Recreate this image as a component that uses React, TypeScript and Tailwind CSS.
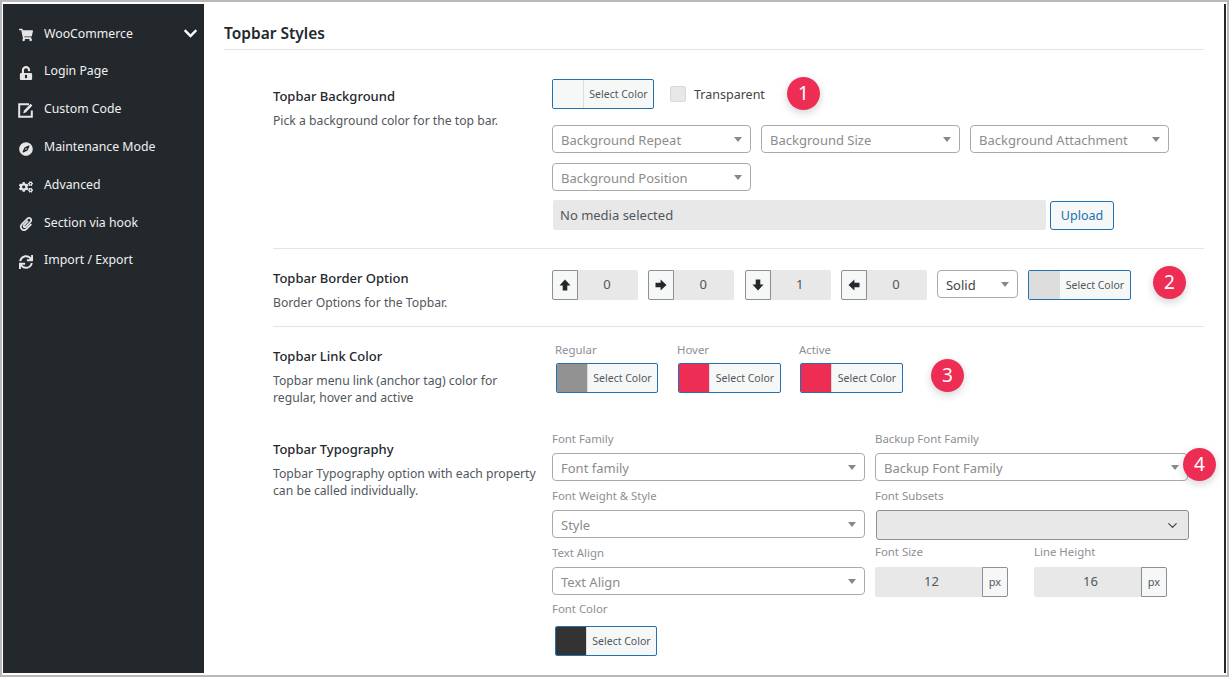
import React from "react";
import { FaShoppingCart, FaUnlockAlt, FaCompass, FaCogs, FaPaperclip, FaSync, FaChevronDown } from "react-icons/fa";
import { ChevronDown } from "lucide-react";

function EditIcon({ className = "" }: { className?: string }) {
  return (
    <svg viewBox="0 0 15 15" className={className} width="15" height="15" aria-hidden="true">
      <path d="M11 1.2H1.2v12.6h12.6V7.5" fill="none" stroke="currentColor" strokeWidth="2" />
      <path d="M12.6 0.8l1.8 1.8-6.6 6.8-2.6.8.8-2.6z" fill="currentColor" />
    </svg>
  );
}

function Arrow({ rotate }: { rotate: number }) {
  return (
    <svg viewBox="0 0 12 12" width="12" height="12" aria-hidden="true" style={{ transform: `rotate(${rotate}deg)` }}>
      <path d="M6 .5L11.5 6.4H8.3V11.5H3.7V6.4H.5z" fill="#23282d" />
    </svg>
  );
}

const menu = [
  { icon: FaShoppingCart, label: "WooCommerce" },
  { icon: FaUnlockAlt, label: "Login Page" },
  { icon: EditIcon, label: "Custom Code" },
  { icon: FaCompass, label: "Maintenance Mode" },
  { icon: FaCogs, label: "Advanced" },
  { icon: FaPaperclip, label: "Section via hook" },
  { icon: FaSync, label: "Import / Export" },
];

function Picker({ color, narrow = false, className = "" }: { color: string; narrow?: boolean; className?: string }) {
  return (
    <div className={"flex h-[30px] shrink-0 overflow-hidden rounded-[2px] border border-[#2271b1] bg-[#f6f7f7] " + (narrow ? "w-[102px] " : "w-[103px] ") + className}>
      <div className="w-[31px] shrink-0 border-r border-[#dcdcde]" style={{ backgroundColor: color }} />
      <div className="flex-1 text-center text-[10.5px] leading-[28px] text-[#50575e]">Select Color</div>
    </div>
  );
}

function Select({ label, className = "", dark = false }: { label: string; className?: string; dark?: boolean }) {
  return (
    <div className={"flex h-[28px] shrink-0 items-center justify-between rounded-[4px] border border-[#aaaaaa] bg-white pl-[8px] pr-[8px] " + className}>
      <span className={"pt-[3px] text-[13px] leading-none " + (dark ? "text-[#444]" : "text-[#8c8c8c]")}>{label}</span>
      <span className="h-0 w-0 border-x-[4px] border-t-[5px] border-x-transparent border-t-[#888]" />
    </div>
  );
}

function Badge({ n, className = "" }: { n: number; className?: string }) {
  return (
    <div className={"flex h-[33px] w-[33px] shrink-0 items-center justify-center rounded-full bg-[#ee2d55] text-[19px] leading-none text-white shadow-[0_3px_8px_rgba(0,0,0,0.18)] " + className}>
      {n}
    </div>
  );
}

function Dim({ rotate, value }: { rotate: number; value: string }) {
  return (
    <div className="flex h-[30px] w-[86px] shrink-0">
      <div className="flex w-[26px] items-center justify-center rounded-l-[2px] border border-[#8c8f94] bg-[#f6f7f7]">
        <Arrow rotate={rotate} />
      </div>
      <div className="flex-1 rounded-r-[2px] bg-[#e8e8e8] pr-[2px] text-center text-[13px] leading-[28px] text-[#50575e]">{value}</div>
    </div>
  );
}

function Info({ title, children }: { title: string; children: React.ReactNode }) {
  return (
    <div className="w-[279px] shrink-0 pr-[12px]">
      <div className="text-[13px] font-medium leading-[18px] text-[#23282d]">{title}</div>
      <div className="mt-[7px] text-[12.2px] leading-[17px] text-[#50575e]">{children}</div>
    </div>
  );
}

function Label({ children, className = "" }: { children: React.ReactNode; className?: string }) {
  return <div className={"text-[11.4px] leading-[15px] text-[#8c8f94] " + className}>{children}</div>;
}

function Unit({ value, className = "" }: { value: string; className?: string }) {
  return (
    <div className={"flex h-[30px] w-[133px] " + className}>
      <div className="flex-1 rounded-l-[2px] bg-[#e8e8e8] pl-[6px] text-center text-[13px] leading-[29px] text-[#50575e]">{value}</div>
      <div className="w-[26px] rounded-r-[2px] border border-[#8c8f94] bg-[#f6f7f7] text-center text-[11px] leading-[28px] text-[#50575e]">px</div>
    </div>
  );
}

export default function App() {
  return (
    <div className="box-border h-[677px] w-[1229px] overflow-hidden border-2 border-[#b9b9b9] bg-white pb-[2px] pl-[1px] pr-[1px] pt-[2px] font-['Noto_Sans','Open_Sans',sans-serif]">
      <div className="flex h-full border-r-2 border-[#23282d]">
        <aside className="w-[201px] shrink-0 bg-[#23282d] pt-[12px]">
          {menu.map(({ icon: Icon, label }) => (
            <div key={label} className="flex h-[37.8px] items-center pl-[15px] pr-[6px] text-[#e6e6e6]">
              <span className="mt-[1px] flex w-[15px] shrink-0 justify-center">
                <Icon className="text-[14px] text-[#e6e6e6]" />
              </span>
              <span className="ml-[11px] flex-1 pb-[2px] text-[12.3px] text-[#f0f0f1]">{label}</span>
              {label === "WooCommerce" && <FaChevronDown className="mb-[3px] text-[15px] text-white" />}
            </div>
          ))}
        </aside>
        <main className="min-w-0 flex-1 pl-[20px] pr-[20px]">
          <h1 className="h-[46px] border-b border-[#e2e4e7] pt-[18px] text-[15.5px] font-semibold leading-[22px] text-[#23282d]">Topbar Styles</h1>
          <div className="ml-[49px]">
            <section className="flex h-[199px] border-b border-[#e2e4e7] pt-[37px]">
              <Info title="Topbar Background">Pick a background color for the top bar.</Info>
              <div className="-mt-[10px] w-[640px]">
                <div className="flex items-center">
                  <Picker color="#f6f7f7" narrow />
                  <div className="ml-[16px] h-[16px] w-[16px] rounded-[2px] border border-[#d8d8d8] bg-[#e8e8e8]" />
                  <span className="ml-[8px] pt-[3px] text-[12.5px] text-[#444]">Transparent</span>
                  <Badge n={1} className="ml-[22px]" />
                </div>
                <div className="mt-[15px] flex gap-[10px]">
                  <Select label="Background Repeat" className="w-[199px]" />
                  <Select label="Background Size" className="w-[199px]" />
                  <Select label="Background Attachment" className="w-[199px]" />
                </div>
                <Select label="Background Position" className="mt-[10px] w-[199px]" />
                <div className="mt-[9px] flex">
                  <div className="ml-[1px] h-[30px] w-[493px] rounded-[2px] bg-[#e8e8e8] pl-[7px] text-[13px] leading-[30px] text-[#50575e]">No media selected</div>
                  <div className="ml-[4px] mt-[1px] h-[29px] w-[64px] rounded-[3px] border border-[#2271b1] bg-[#f6f7f7] text-center text-[12.5px] leading-[27px] text-[#2271b1]">Upload</div>
                </div>
              </div>
            </section>
            <section className="flex h-[78px] border-b border-[#e2e4e7] pt-[20px]">
              <Info title="Topbar Border Option">Border Options for the Topbar.</Info>
              <div className="mt-[1px] flex items-start">
                <div className="flex gap-[10.33px]">
                  <Dim rotate={0} value="0" />
                  <Dim rotate={90} value="0" />
                  <Dim rotate={180} value="1" />
                  <Dim rotate={270} value="0" />
                </div>
                <Select label="Solid" dark className="ml-[10px] w-[81px]" />
                <Picker color="#dddddd" className="ml-[10px]" />
                <Badge n={2} className="-mt-[4px] ml-[22px]" />
              </div>
            </section>
            <section className="flex h-[99px] pt-[20px]">
              <Info title="Topbar Link Color">
                Topbar menu link (anchor tag) color for
                <br />
                regular, hover and active
              </Info>
              <div className="-mt-[5px] flex items-start pl-[4px]">
                <div className="w-[122px]">
                  <Label className="-ml-[1px] mb-[6px]">Regular</Label>
                  <Picker color="#929292" narrow />
                </div>
                <div className="w-[122px]">
                  <Label className="-ml-[1px] mb-[6px]">Hover</Label>
                  <Picker color="#ee2d55" />
                </div>
                <div>
                  <Label className="-ml-[1px] mb-[6px]">Active</Label>
                  <Picker color="#ee2d55" />
                </div>
                <Badge n={3} className="ml-[28px] mt-[17px]" />
              </div>
            </section>
            <section className="flex">
              <div className="pt-[14px]">
                <Info title="Topbar Typography">
                  Topbar Typography option with each property
                  <br />
                  can be called individually.
                </Info>
              </div>
              <div className="pt-[5px]">
                <div className="grid grid-cols-[313px_314px] gap-x-[10px]">
                  <div>
                    <Label className="mb-[7px]">Font Family</Label>
                    <Select label="Font family" className="w-[313px]" />
                  </div>
                  <div className="relative">
                    <Label className="mb-[7px]">Backup Font Family</Label>
                    <Select label="Backup Font Family" className="w-[313px]" />
                    <Badge n={4} className="absolute left-[308px] top-[17px]" />
                  </div>
                  <div className="mt-[7px]">
                    <Label className="mb-[7px]">Font Weight &amp; Style</Label>
                    <Select label="Style" className="w-[313px]" />
                  </div>
                  <div className="mt-[7px] pl-[1px]">
                    <Label className="-ml-[1px] mb-[7px]">Font Subsets</Label>
                    <div className="flex h-[30px] w-[313px] items-center justify-end rounded-[3px] border border-[#8c8f94] bg-[#e8e8e8] pr-[8px]">
                      <ChevronDown size={15} className="text-[#444]" strokeWidth={2} />
                    </div>
                  </div>
                  <div className="-mt-[2px]">
                    <Label className="mb-[7px] pt-[7px]">Text Align</Label>
                    <Select label="Text Align" className="w-[313px]" />
                  </div>
                  <div className="-mt-[3px] flex gap-[26px] pt-[7px]">
                    <div>
                      <Label className="mb-[8px]">Font Size</Label>
                      <Unit value="12" />
                    </div>
                    <div>
                      <Label className="mb-[8px]">Line Height</Label>
                      <Unit value="16" />
                    </div>
                  </div>
                </div>
                <Label className="mt-[4px]">Font Color</Label>
                <Picker color="#333333" narrow className="ml-[3px] mt-[10px]" />
              </div>
            </section>
          </div>
        </main>
      </div>
    </div>
  );
}
